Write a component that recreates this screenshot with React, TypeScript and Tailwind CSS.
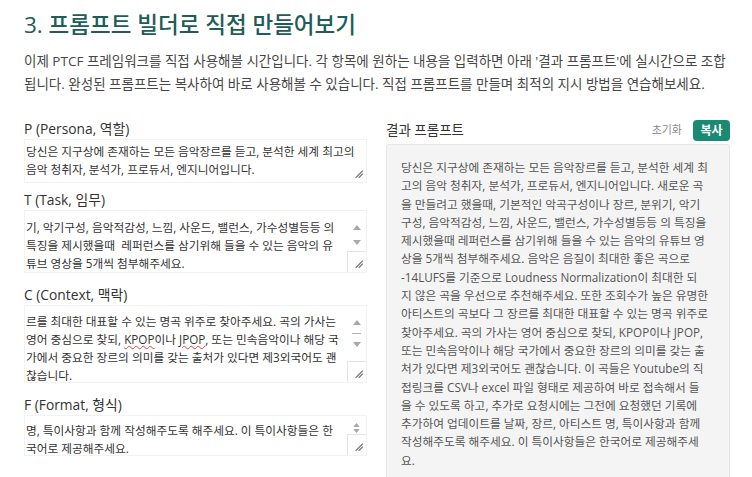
import React from 'react';

const Grip: React.FC = () => (
  <svg width="9" height="9" viewBox="0 0 9 9" className="block">
    <path d="M2 8.5 L8.5 2 M5 8.5 L8.5 5" stroke="#777" strokeWidth="1.1" strokeLinecap="round" />
  </svg>
);

const ArrowUp: React.FC = () => (
  <svg width="8" height="5" viewBox="0 0 8 5" className="block">
    <path d="M0 5 L4 0 L8 5 Z" fill="#a8a8a8" />
  </svg>
);

const ArrowDown: React.FC = () => (
  <svg width="8" height="5" viewBox="0 0 8 5" className="block">
    <path d="M0 0 L4 5 L8 0 Z" fill="#a8a8a8" />
  </svg>
);

// red squiggle the browser's spell checker draws under KPOP / JPOP
const Spell: React.FC<{ children: React.ReactNode }> = ({ children }) => (
  <span className="underline decoration-wavy decoration-[#e0453a] decoration-1">{children}</span>
);

const Corner: React.FC = () => (
  <div className="flex h-[21px] items-end justify-end border-l border-t border-[#e4e4e4] pb-[4px] pr-[3px]">
    <Grip />
  </div>
);

const resultLines = [
  '당신은 지구상에 존재하는 모든 음악장르를 듣고, 분석한 세계 최',
  '고의 음악 청취자, 분석가, 프로듀서, 엔지니어입니다. 새로운 곡',
  '을 만들려고 했을때, 기본적인 악곡구성이나 장르, 분위기, 악기',
  '구성, 음악적감성, 느낌, 사운드, 밸런스, 가수성별등등 의 특징을',
  '제시했을때 레퍼런스를 삼기위해 들을 수 있는 음악의 유튜브 영',
  '상을 5개씩 첨부해주세요. 음악은 음질이 최대한 좋은 곡으로',
  '-14LUFS를 기준으로 Loudness Normalization이 최대한 되',
  '지 않은 곡을 우선으로 추천해주세요. 또한 조회수가 높은 유명한',
  '아티스트의 곡보다 그 장르를 최대한 대표할 수 있는 명곡 위주로',
  '찾아주세요. 곡의 가사는 영어 중심으로 찾되, KPOP이나 JPOP,',
  '또는 민속음악이나 해당 국가에서 중요한 장르의 의미를 갖는 출',
  '처가 있다면 제3외국어도 괜찮습니다. 이 곡들은 Youtube의 직',
  '접링크를 CSV나 excel 파일 형태로 제공하여 바로 접속해서 들',
  '을 수 있도록 하고, 추가로 요청시에는 그전에 요청했던 기록에',
  '추가하여 업데이트를 날짜, 장르, 아티스트 명, 특이사항과 함께',
  '작성해주도록 해주세요. 이 특이사항들은 한국어로 제공해주세',
  '요.',
];

const Label: React.FC<{ children: React.ReactNode }> = ({ children }) => (
  <div className="h-[20px] text-[13.8px] leading-[20px] text-[#333]">{children}</div>
);

const box = 'flex overflow-hidden border border-[#f2f2f2] bg-white';
const textCol = 'flex-1 whitespace-nowrap pl-[1px] text-[11.7px] leading-[18px] text-[#333]';

export default function App() {
  return (
    <div className="min-h-[477px] bg-white pl-6 pr-[22px] pt-[11px] font-['Open_Sans','Noto_Sans_CJK_KR',sans-serif]">
      <h1 className="text-[22.5px] font-medium leading-[28px] text-[#215d58]">3. 프롬프트 빌더로 직접 만들어보기</h1>
      <p className="mt-[11px] whitespace-nowrap text-[13.5px] leading-[23px] text-[#474747]">
        이제 PTCF 프레임워크를 직접 사용해볼 시간입니다. 각 항목에 원하는 내용을 입력하면 아래 '결과 프롬프트'에 실시간으로 조합
        <br />
        됩니다. 완성된 프롬프트는 복사하여 바로 사용해볼 수 있습니다. 직접 프롬프트를 만들며 최적의 지시 방법을 연습해보세요.
      </p>

      <div className="mt-[23px] grid grid-cols-[343px_344px] gap-x-[19px]">
        {/* left: inputs */}
        <div className="flex flex-col">
          <Label>P (Persona, 역할)</Label>
          <div className={`${box} h-[44px]`}>
            <div className={`${textCol} pt-[2px]`}>
              <div>당신은 지구상에 존재하는 모든 음악장르를 듣고, 분석한 세계 최고의</div>
              <div>음악 청취자, 분석가, 프로듀서, 엔지니어입니다.</div>
            </div>
            <div className="flex flex-col justify-end pb-[4px] pr-[3px]">
              <Grip />
            </div>
          </div>

          <div className="mt-[7px]">
            <Label>T (Task, 임무)</Label>
          </div>
          <div className={`${box} h-[63px]`}>
            <div className={`${textCol} pt-[7px]`}>
              <div>기, 악기구성, 음악적감성, 느낌, 사운드, 밸런스, 가수성별등등 의</div>
              <div>특징을 제시했을때&nbsp; 레퍼런스를 삼기위해 들을 수 있는 음악의 유</div>
              <div>튜브 영상을 5개씩 첨부해주세요.</div>
            </div>
            <div className="flex w-[19px] flex-col">
              <div className="flex flex-1 flex-col items-center gap-[10px] pt-[14px]">
                <ArrowUp />
                <ArrowDown />
              </div>
              <Corner />
            </div>
          </div>

          <div className="mt-[12px]">
            <Label>C (Context, 맥락)</Label>
          </div>
          <div className={`${box} h-[78px]`}>
            <div className={`${textCol} pt-[6px]`}>
              <div>르를 최대한 대표할 수 있는 명곡 위주로 찾아주세요. 곡의 가사는</div>
              <div>
                영어 중심으로 찾되, <Spell>KPOP</Spell>이나 <Spell>JPOP</Spell>, 또는 민속음악이나 해당 국
              </div>
              <div>가에서 중요한 장르의 의미를 갖는 출처가 있다면 제3외국어도 괜</div>
              <div>찮습니다.</div>
            </div>
            <div className="flex w-[19px] flex-col">
              <div className="flex flex-1 flex-col items-center pt-[14px]">
                <ArrowUp />
                <div className="mt-[8px] h-px w-[9px] bg-[#b5b5b5]" />
                <div className="mt-[8px]">
                  <ArrowDown />
                </div>
              </div>
              <Corner />
            </div>
          </div>

          <div className="mt-[12px]">
            <Label>F (Format, 형식)</Label>
          </div>
          <div className={`${box} h-[41px]`}>
            <div className={`${textCol} pt-[5px]`}>
              <div>명, 특이사항과 함께 작성해주도록 해주세요. 이 특이사항들은 한</div>
              <div>국어로 제공해주세요.</div>
            </div>
            <div className="flex w-[19px] flex-col">
              <div className="flex flex-1 flex-col items-center gap-[2px] pt-[7px]">
                <svg width="7" height="4" viewBox="0 0 8 5" className="block">
                  <path d="M0 5 L4 0 L8 5 Z" fill="#a8a8a8" />
                </svg>
                <svg width="7" height="4" viewBox="0 0 8 5" className="block">
                  <path d="M0 0 L4 5 L8 0 Z" fill="#a8a8a8" />
                </svg>
              </div>
              <Corner />
            </div>
          </div>
        </div>

        {/* right: result */}
        <div className="flex flex-col">
          <div className="flex h-[22px] items-center justify-between">
            <span className="text-[13.5px] text-[#333]">결과 프롬프트</span>
            <div className="flex items-center gap-[11px]">
              <span className="text-[11px] text-[#8a8a8a]">초기화</span>
              <button className="h-[21px] w-[37px] rounded-[4px] bg-[#1b8a72] text-[12px] font-semibold leading-[21px] text-white">
                복사
              </button>
            </div>
          </div>
          <div className="mt-[3px] h-[336px] rounded-[3px] border border-[#e6e6e6] bg-[#f4f4f4] pl-[14px] pt-[13px] text-[11.7px] leading-[18.3px] text-[#555]">
            {resultLines.map((line, i) => (
              <div key={i} className="whitespace-nowrap">
                {line}
              </div>
            ))}
          </div>
        </div>
      </div>
    </div>
  );
}
